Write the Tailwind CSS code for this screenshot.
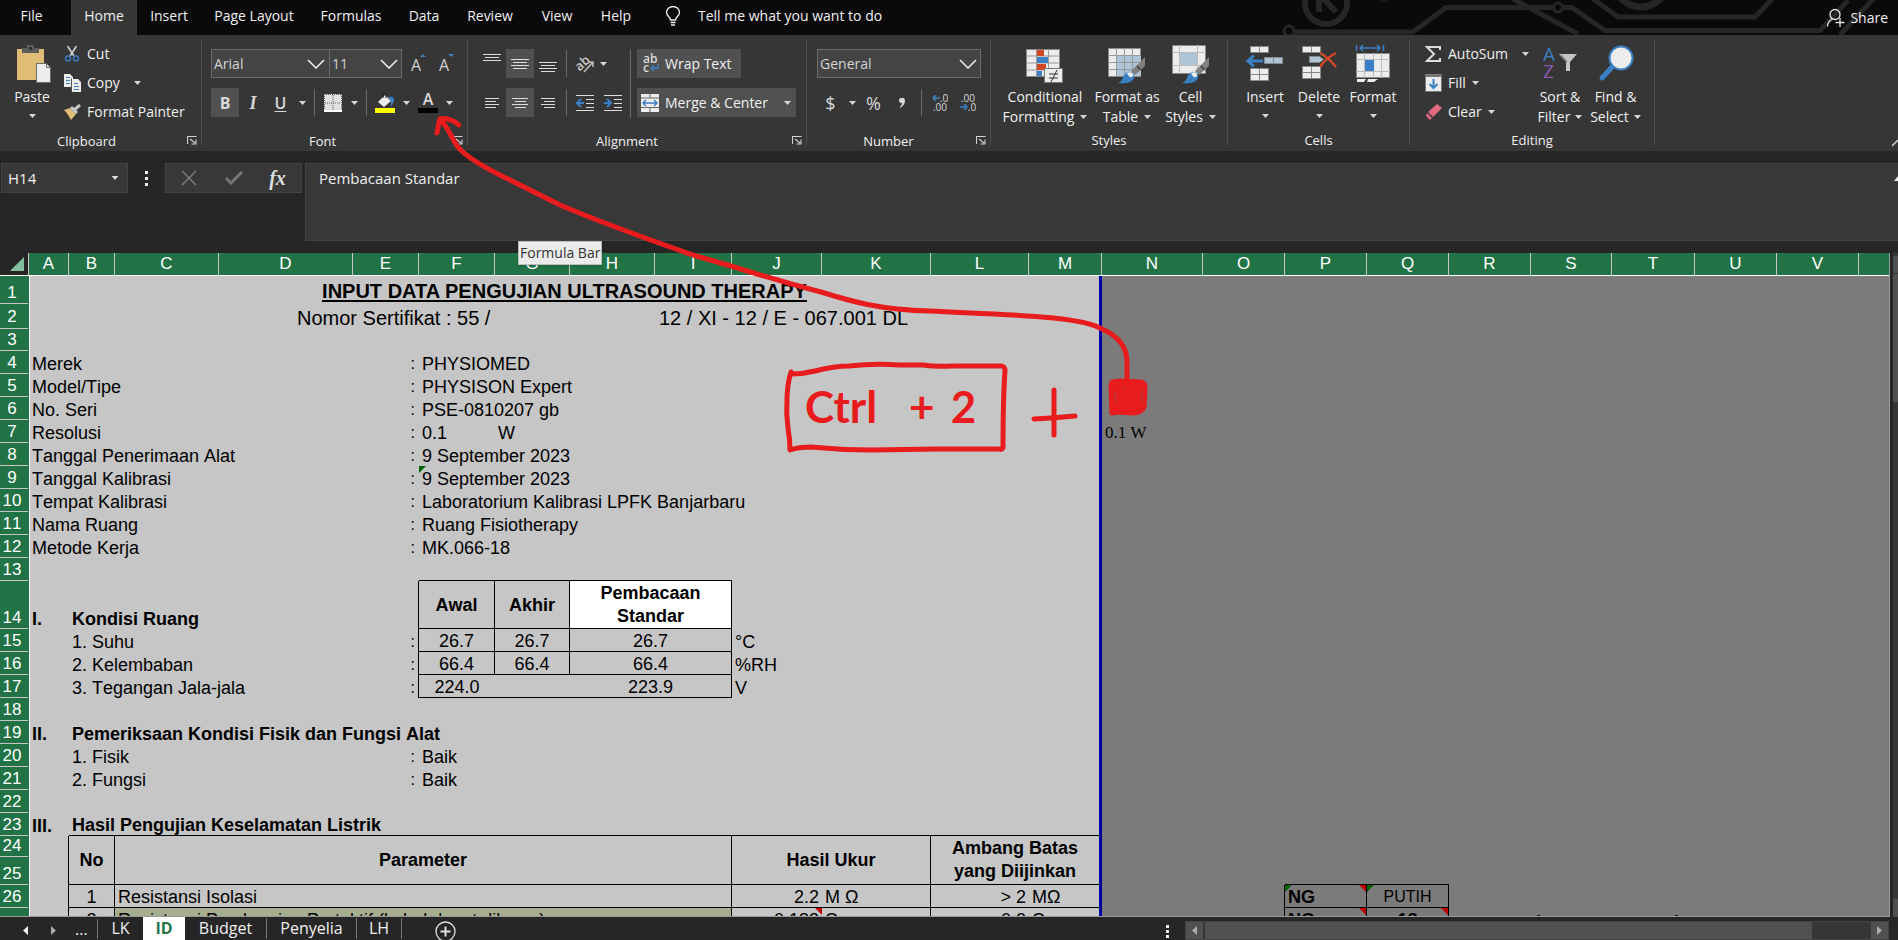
<!DOCTYPE html>
<html lang="en">
<head>
<meta charset="utf-8">
<meta name="viewport" content="width=device-width, initial-scale=1">
<title>Spreadsheet</title>
<script src="https://cdn.jsdelivr.net/npm/@tailwindcss/browser@4"></script>
</head>
<body class="relative flex h-screen flex-col overflow-hidden bg-[#262626] font-['Open_Sans','Noto_Sans',sans-serif] text-sm leading-5 text-[#f0f0f0]">
<svg class="hidden" aria-hidden="true">
  <symbol id="caret" viewBox="0 0 7 4"><path d="M0 0h7L3.5 4z" fill="#d8d8d8"/></symbol>
  <symbol id="launch" viewBox="0 0 10 9"><path d="M.5 8V.5H9.500M3 3l5 4M9 3.500V8H4.500" fill="none" stroke="#d0d0d0" stroke-width="1.100"/></symbol>
  <symbol id="chev" viewBox="0 0 18 10"><path d="M1 1l8 8 8-8" fill="none" stroke="#f0f0f0" stroke-width="1.500"/></symbol>
  <symbol id="brush" viewBox="0 0 28 28"><path d="M27 1v9L17 19l-4-4z" fill="#808080"/><path d="M19 10l3.500 4" stroke="#363636" stroke-width="1.200"/><path d="M0 27c6-2 4-9 10-11 4-1 7 3 6 6-2 5-10 6-16 5z" fill="#3b7fc4"/><path d="M9 17c3-2 7 0 6 3-2 3-5 0-6-3z" fill="#ececec"/></symbol>
</svg>

<!-- Ribbon tabs -->
<nav class="relative flex h-[35px] shrink-0 items-stretch bg-[#0a0a0a] pb-2" aria-label="Ribbon tabs">
  <svg class="absolute top-0 right-0 h-[35px] w-[620px]" viewBox="1278 0 620 35" fill="none" stroke="#262626" stroke-width="5" aria-hidden="true">
    <circle cx="1326" cy="3" r="21" stroke-width="6"/><path d="M1319-6v18M1319-6l17 18" stroke-width="6"/>
    <circle cx="1289" cy="31" r="5" stroke-width="3"/><path d="M1294 32h119l33-24.500h107M1563 7.500h9l33 23h215l28-30M1513-1l65 35M1592-2l26 19h137l18-19M1840 35l34-37"/>
    <circle cx="1558" cy="7.500" r="4.500" stroke-width="3"/><circle cx="1641" cy="-20" r="27" stroke-width="7"/><circle cx="1384" cy="-3" r="4" fill="#262626" stroke="none"/>
  </svg>
  <button class="w-[71px] pt-[5px] pr-2 leading-5">File</button>
  <button class="-mb-2 w-[66px] bg-[#363636] pb-[3px]">Home</button>
  <button class="w-16 pt-[5px]">Insert</button>
  <button class="w-[106px] pt-[5px]">Page Layout</button>
  <button class="w-[88px] pt-[5px]">Formulas</button>
  <button class="w-[58px] pt-[5px]">Data</button>
  <button class="w-[74px] pt-[5px]">Review</button>
  <button class="w-[60px] pt-[5px]">View</button>
  <button class="w-[58px] pt-[5px]">Help</button>
  <button class="flex items-center gap-[17px] pt-[5px] pl-5">
    <svg class="h-5 w-4" viewBox="0 0 16 20" fill="none" stroke="#f0f0f0" stroke-width="1.300"><path d="M5.500 14c0-3-4-4-4-7.500a6.500 6 0 0 1 13 0c0 3.500-4 4.500-4 7.500zM5.500 16.500h5M6 19h4"/></svg>
    Tell me what you want to do</button>
  <button class="relative ml-auto flex items-center gap-1 pt-2 pr-[10px]">
    <svg class="size-5" viewBox="0 0 20 20" fill="none" stroke="#e4e4e4" stroke-width="1.300"><circle cx="9" cy="6.500" r="5"/><path d="M1.500 18.500c0-4 2-6 5-7.500M14 10v9M9.500 14.500h9"/></svg>Share</button>
</nav>

<!-- Ribbon -->
<section class="flex h-[116px] shrink-0 bg-[#363636] pt-[5px]" aria-label="Ribbon">
  <!-- Clipboard -->
  <div class="flex w-[201px] shrink-0 flex-col">
    <div class="flex flex-1">
      <button class="flex w-16 flex-col items-center pt-[5px]">
        <svg class="ml-1 h-[38px] w-9" viewBox="0 0 36 38"><rect x="1" y="4" width="27" height="31" fill="#e0bd75"/><path d="M6 8V3h5V0h7v3h5v5z" fill="#5c5c5c"/><rect x="13" y="2" width="3" height="3" fill="#2c2c2c"/><path d="M20.500 18.500h10l4 4v15h-14z" fill="#ececec" stroke="#6b6b6b"/><path d="M30.500 18.500v4h4" fill="none" stroke="#6b6b6b"/></svg>
        <span class="pt-1">Paste</span><svg class="mt-[7px] h-1 w-[7px]"><use href="#caret"/></svg>
      </button>
      <div class="-mt-px flex flex-col">
        <button class="flex h-[29px] items-center gap-[7px]"><svg class="size-4" viewBox="0 0 16 18"><path d="M3 0l7 11M13 0L6 11" stroke="#c8c8c8" stroke-width="2"/><g fill="none" stroke="#3b7fc4" stroke-width="1.500"><circle cx="3.500" cy="14" r="2.800"/><circle cx="12.500" cy="14" r="2.800"/></g></svg>Cut</button>
        <button class="flex h-[29px] items-center gap-[6px]"><svg class="h-[18px] w-[17px]" viewBox="0 0 17 18"><path d="M0 0h6l3 3v10H0zM8 5h6l3 3v10H8z" fill="#ececec"/><path d="M7.500 4.500v13" stroke="#555"/><path d="M2 3.500h4M2 6.500h4M2 9.500h4M10 9.500h4M10 12.500h5M10 15.500h5" stroke="#3b7fc4"/></svg>Copy<svg class="ml-2 h-1 w-[7px]"><use href="#caret"/></svg></button>
        <button class="flex h-[29px] items-center gap-[6px]"><svg class="h-4 w-[17px]" viewBox="0 0 17 16"><path d="M0 6l6-2 6 6-5 6C5 12 3 9 0 6z" fill="#e0bd75"/><path d="M7 3l6 6M10 6l6-5" stroke="#c8c8c8" stroke-width="3"/></svg>Format Painter</button>
      </div>
    </div>
    <div class="grid h-[21px] grid-cols-[1fr_auto_1fr] items-center text-[13px]"><i></i><span class="pr-7">Clipboard</span><button class="ml-auto pr-1" aria-label="Clipboard settings"><svg class="h-[9px] w-[10px]"><use href="#launch"/></svg></button></div>
  </div>
  <div class="h-[105px] w-px shrink-0 bg-[#505050]"></div>
  <!-- Font -->
  <div class="flex w-[265px] shrink-0 flex-col">
    <div class="flex flex-1 flex-col gap-[10px] pt-[9px] pl-[9px]">
      <div class="flex h-[29px]">
        <label class="grid w-[119px] items-center border border-[#6a6a6a] bg-[#444]"><select aria-label="Font" class="col-start-1 row-start-1 appearance-none pl-[2px] text-[#d4d4d4]"><option>Arial</option></select><svg class="pointer-events-none col-start-1 row-start-1 mr-1 ml-auto h-[10px] w-[18px]"><use href="#chev"/></svg></label>
        <label class="-ml-px grid w-[73px] items-center border border-[#6a6a6a] bg-[#444]"><select aria-label="Font size" class="col-start-1 row-start-1 appearance-none pl-[2px] text-[#d4d4d4]"><option>11</option></select><svg class="pointer-events-none col-start-1 row-start-1 mr-[3px] ml-auto h-[10px] w-[18px]"><use href="#chev"/></svg></label>
        <button class="relative w-7 pt-[2px] text-base text-[#d0d0d0]" aria-label="Increase font size">A<svg class="absolute top-[5px] right-1 h-[3px] w-[6px]"><path d="M0 3h6L3 0z" fill="#3b7fc4"/></svg></button>
        <button class="relative w-7 pt-[2px] text-base text-[#d0d0d0]" aria-label="Decrease font size">A<svg class="absolute top-[5px] right-1 h-[3px] w-[6px]"><path d="M0 0h6L3 3z" fill="#3b7fc4"/></svg></button>
      </div>
      <div class="flex h-[29px] items-center">
        <button class="h-full w-7 bg-[#505050] text-base font-bold text-[#d8d8d8]">B</button>
        <button class="w-7 font-['Liberation_Serif',serif] text-lg font-bold text-[#d8d8d8] italic">I</button>
        <button class="w-[27px] text-base font-semibold text-[#d8d8d8] underline underline-offset-2">U</button>
        <button class="flex w-4 justify-center" aria-label="Underline options"><svg class="h-1 w-[7px]"><use href="#caret"/></svg></button>
        <i class="mx-1 h-[27px] w-px bg-[#6a6a6a]"></i>
        <button class="flex w-[27px] justify-center" aria-label="Borders"><svg class="size-[18px]" viewBox="0 0 18 18"><path d="M0 0h18v18H0z" fill="#e0e0e0"/><path d="M0 .5h18M.5 0v18M17.500 0v18M9 1v16M1 9h16" stroke="#666" stroke-dasharray="1 1"/><path d="M0 17h18" stroke="#fff" stroke-width="2"/></svg></button>
        <button class="flex w-4 justify-center" aria-label="Border options"><svg class="h-1 w-[7px]"><use href="#caret"/></svg></button>
        <i class="mx-1 h-[27px] w-px bg-[#6a6a6a]"></i>
        <button class="flex w-7 justify-center" aria-label="Fill color"><svg class="h-5 w-5" viewBox="0 0 20 20"><path d="M3 9l7-7 6 6-7 6z" fill="#ececec"/><path d="M8 5V1q2-2 3 0v4" fill="none" stroke="#222"/><path d="M13 4q7-1 6 4l-3 6V8z" fill="#3b7fc4"/><path d="M0 15h20v5H0z" fill="#ff0"/></svg></button>
        <button class="flex w-[14px] justify-center" aria-label="Fill color options"><svg class="h-1 w-[7px]"><use href="#caret"/></svg></button>
        <button class="flex w-[30px] flex-col items-center text-base leading-[14px] font-semibold text-[#d8d8d8]" aria-label="Font color">A<span class="mt-[2px] h-[5px] w-5 bg-black"></span></button>
        <button class="flex w-3 justify-center" aria-label="Font color options"><svg class="h-1 w-[7px]"><use href="#caret"/></svg></button>
      </div>
    </div>
    <div class="grid h-[21px] grid-cols-[1fr_auto_1fr] items-center text-[13px]"><i></i><span class="pr-6">Font</span><button class="ml-auto pr-1" aria-label="Font settings"><svg class="h-[9px] w-[10px]"><use href="#launch"/></svg></button></div>
  </div>
  <div class="h-[105px] w-px shrink-0 bg-[#505050]"></div>
  <!-- Alignment -->
  <div class="flex w-[338px] shrink-0 flex-col">
    <div class="flex flex-1 pt-[9px] pl-[10px]">
      <div class="flex w-[152px] flex-col gap-[10px]">
        <div class="flex h-[29px] items-center">
          <button class="flex h-full w-7 items-start justify-center pt-[5px]" aria-label="Top align"><svg class="h-2 w-[18px]"><path d="M0 .5h18M2 3.500h14M0 6.500h18" stroke="#dcdcdc"/></svg></button>
          <button class="flex h-full w-7 items-center justify-center bg-[#505050]" aria-label="Middle align"><svg class="h-3 w-[18px]"><path d="M0 1.500h18M2 4.500h14M0 7.500h18M2 10.500h14" stroke="#dcdcdc"/></svg></button>
          <button class="flex h-full w-7 items-end justify-center pb-[5px]" aria-label="Bottom align"><svg class="h-3 w-[18px]"><path d="M0 1.500h18M2 4.500h14M0 7.500h18M2 10.500h14" stroke="#dcdcdc"/></svg></button>
          <i class="mx-1 h-[27px] w-px bg-[#6a6a6a]"></i>
          <button class="ml-1 flex items-center gap-[5px]" aria-label="Orientation"><svg class="h-[18px] w-5 overflow-visible" viewBox="0 0 20 18"><text x="0" y="13" font-size="13" font-weight="600" fill="#c8c8c8" transform="rotate(-42 7 9)" font-family="Open Sans">ab</text><path d="M9 17L18 7M13 7h5v5" fill="none" stroke="#c0c0c0" stroke-width="1.500"/></svg><svg class="h-1 w-[7px]"><use href="#caret"/></svg></button>
        </div>
        <div class="flex h-[29px] items-center">
          <button class="flex h-full w-7 items-center justify-center" aria-label="Align left"><svg class="h-3 w-[14px]"><path d="M0 1.500h14M0 4.500h11M0 7.500h14M0 10.500h11" stroke="#dcdcdc"/></svg></button>
          <button class="flex h-full w-7 items-center justify-center bg-[#505050]" aria-label="Center"><svg class="h-3 w-4"><path d="M0 1.500h16M3 4.500h11M0 7.500h16M3 10.500h11" stroke="#dcdcdc"/></svg></button>
          <button class="flex h-full w-7 items-center justify-center" aria-label="Align right"><svg class="h-3 w-[14px]"><path d="M0 1.500h14M3 4.500h11M0 7.500h14M3 10.500h11" stroke="#dcdcdc"/></svg></button>
          <i class="mx-1 h-[27px] w-px bg-[#6a6a6a]"></i>
          <button class="flex w-7 justify-center" aria-label="Decrease indent"><svg class="h-4 w-[18px]"><path d="M0 .5h18M10 4.500h8M10 8.500h8M10 12.500h8M0 15.500h18" stroke="#dcdcdc"/><path d="M8 8H1M5 4L1 8l4 4" fill="none" stroke="#3b7fc4" stroke-width="2"/></svg></button>
          <button class="flex w-7 justify-center" aria-label="Increase indent"><svg class="h-4 w-[18px]"><path d="M0 .5h18M10 4.500h8M10 8.500h8M10 12.500h8M0 15.500h18" stroke="#dcdcdc"/><path d="M0 8h7M3 4l4 4-4 4" fill="none" stroke="#3b7fc4" stroke-width="2"/></svg></button>
        </div>
      </div>
      <i class="h-[69px] w-px bg-[#6a6a6a]"></i>
      <div class="flex flex-col items-start gap-[10px] pl-[6px]">
        <button class="flex h-[29px] w-[104px] items-center gap-[6px] bg-[#505050] pl-[6px]"><svg class="h-[18px] w-4 overflow-visible" viewBox="0 0 16 18"><g font-family="Open Sans" font-size="12" font-weight="600" fill="#dcdcdc"><text x="0" y="8">ab</text><text x="0" y="17">c</text></g><path d="M15 9v4H9M11 10.500L8 13l3 3" fill="none" stroke="#3b7fc4" stroke-width="1.500"/></svg>Wrap Text</button>
        <button class="flex h-[29px] w-[159px] items-center gap-[6px] bg-[#505050] pl-1"><svg class="size-[18px]" viewBox="0 0 18 18"><path d="M0 0h18v18H0z" fill="#ececec"/><path d="M0 4h18M0 13.500h18M9 0v4M9 13v5" stroke="#666"/><path d="M2 9h14M5 6L2 9l3 3M13 6l3 3-3 3" fill="none" stroke="#3b7fc4" stroke-width="1.500"/></svg>Merge &amp; Center<svg class="mr-[5px] ml-auto h-1 w-[7px]"><use href="#caret"/></svg></button>
      </div>
    </div>
    <div class="grid h-[21px] grid-cols-[1fr_auto_1fr] items-center text-[13px]"><i></i><span class="pr-5">Alignment</span><button class="ml-auto pr-1" aria-label="Alignment settings"><svg class="h-[9px] w-[10px]"><use href="#launch"/></svg></button></div>
  </div>
  <div class="h-[105px] w-px shrink-0 bg-[#505050]"></div>
  <!-- Number -->
  <div class="flex w-[183px] shrink-0 flex-col">
    <div class="flex flex-1 flex-col gap-[10px] pt-[9px] pl-[10px]">
      <label class="grid h-[29px] w-[164px] items-center border border-[#6a6a6a] bg-[#444]"><select aria-label="Number format" class="col-start-1 row-start-1 appearance-none pl-[2px] text-[#d4d4d4]"><option>General</option></select><svg class="pointer-events-none col-start-1 row-start-1 mr-[3px] ml-auto h-[10px] w-[18px]"><use href="#chev"/></svg></label>
      <div class="flex h-[29px] items-center text-[#d8d8d8]">
        <button class="w-[27px] text-lg">$</button>
        <button class="flex w-4 justify-center" aria-label="Currency options"><svg class="h-1 w-[7px]"><use href="#caret"/></svg></button>
        <button class="w-[27px] text-lg">%</button>
        <button class="flex w-[30px] justify-center" aria-label="Comma style"><svg class="h-[10px] w-[6px]"><path d="M0 2.500a2.700 2.500 0 0 1 6 0Q6 7 1 10V9Q3 7 3 5 0 5 0 2.500z" fill="#d8d8d8"/></svg></button>
        <i class="mx-1 h-[27px] w-px bg-[#6a6a6a]"></i>
        <button class="flex w-7 flex-col items-center text-[10px] leading-[9px]"><span class="flex items-center"><svg class="h-[6px] w-[8px]"><path d="M8 3H1M4 0L1 3l3 3" fill="none" stroke="#3b7fc4" stroke-width="1.500"/></svg>.0</span><span>.00</span></button>
        <button class="flex w-7 flex-col items-center text-[10px] leading-[9px]"><span>.00</span><span class="flex items-center"><svg class="h-[6px] w-[8px]"><path d="M0 3h7M4 0l3 3-3 3" fill="none" stroke="#3b7fc4" stroke-width="1.500"/></svg>.0</span></button>
      </div>
    </div>
    <div class="grid h-[21px] grid-cols-[1fr_auto_1fr] items-center text-[13px]"><i></i><span class="pr-5">Number</span><button class="ml-auto pr-1" aria-label="Number settings"><svg class="h-[9px] w-[10px]"><use href="#launch"/></svg></button></div>
  </div>
  <div class="h-[105px] w-px shrink-0 bg-[#505050]"></div>
  <!-- Styles -->
  <div class="flex w-[236px] shrink-0 flex-col">
    <div class="flex flex-1 pt-1 pl-[9px]">
      <button class="flex w-[90px] flex-col items-center"><svg class="h-[40px] w-[38px]" viewBox="0 0 38 40"><path d="M.5 5.500h33v27H.5z" fill="#ececec" stroke="#888"/><path d="M0 12h34M0 19h34M0 26h34M10.500 5v28M22.500 5v28" stroke="#999"/><path d="M11 6h7v6h-7zM11 20h9v6h-9z" fill="#d24726"/><path d="M11 13h11v6H11zM11 27h5v5h-5z" fill="#3b7fc4"/><path d="M18.500 24.500h18v14h-18z" fill="#ececec" stroke="#777"/><path d="M23 30h9M23 34h9M31 26l-6 12" stroke="#333"/></svg><span class="pt-[3px]">Conditional</span><span class="flex items-center gap-[6px]">Formatting<svg class="h-1 w-[7px]"><use href="#caret"/></svg></span></button>
      <button class="flex w-[74px] flex-col items-center"><svg class="h-[40px] w-[38px]" viewBox="0 0 38 40"><path d="M.5 4.500h32v28H.5z" fill="#ececec" stroke="#888"/><path d="M9 12h24v20H9z" fill="#b0c4d8"/><path d="M0 11.500h33M0 18.500h33M0 25.500h33M8.500 4v29M16.500 4v29M24.500 4v29" stroke="#999"/><svg x="10" y="12" width="28" height="28"><use href="#brush"/></svg></svg><span class="pt-[3px] whitespace-nowrap">Format as</span><span class="flex items-center gap-[6px]">Table<svg class="h-1 w-[7px]"><use href="#caret"/></svg></span></button>
      <button class="flex w-[53px] flex-col items-center"><svg class="h-[40px] w-[38px]" viewBox="0 0 38 40"><path d="M.5 1.500h33v28H.5z" fill="#ececec" stroke="#888"/><path d="M0 8.500h34M0 21.500h34M7.500 1v29M25.500 1v29" stroke="#bbb"/><path d="M8 9h17v12H8z" fill="#b0c4d8"/><svg x="10" y="12" width="28" height="28"><use href="#brush"/></svg></svg><span class="pt-[3px]">Cell</span><span class="flex items-center gap-[6px]">Styles<svg class="h-1 w-[7px]"><use href="#caret"/></svg></span></button>
    </div>
    <div class="h-[21px] text-center text-[13px]">Styles</div>
  </div>
  <div class="h-[105px] w-px shrink-0 bg-[#505050]"></div>
  <!-- Cells -->
  <div class="flex w-[181px] shrink-0 flex-col">
    <div class="flex flex-1 pt-1 pl-[10px]">
      <button class="flex w-[54px] flex-col items-center"><svg class="h-[40px] w-[38px]" viewBox="0 0 38 40"><g fill="#ececec" stroke="#888"><path d="M4.500 2.500h18v6h-18zM4.500 24.500h18v12h-18zM13.500 2.500v6M13.500 24.500v12M4.500 30.500h18"/><path d="M18.500 13.500h18v6h-18zM27.500 13.500v6" fill="#b0c4d8"/></g><path d="M17 17H3M8 11.500L2 17l6 5.500" fill="none" stroke="#3b7fc4" stroke-width="3"/></svg><span class="pt-[3px]">Insert</span><svg class="mt-[7px] h-1 w-[7px]"><use href="#caret"/></svg></button>
      <button class="flex w-[54px] flex-col items-center"><svg class="h-[40px] w-[38px]" viewBox="0 0 38 40"><g fill="#ececec" stroke="#888"><path d="M2.500 2.500h18v6h-18zM2.500 22.500h18v12h-18zM11.500 2.500v6M11.500 22.500v12M2.500 28.500h18"/><path d="M9.500 12.500h10l4 3-4 3h-10z" fill="#b0c4d8"/></g><path d="M20 9q8 4 16 14M36 9q-10 5-16 14" fill="none" stroke="#d24726" stroke-width="2.500"/></svg><span class="pt-[3px]">Delete</span><svg class="mt-[7px] h-1 w-[7px]"><use href="#caret"/></svg></button>
      <button class="flex w-[54px] flex-col items-center"><svg class="h-[40px] w-[38px]" viewBox="0 0 38 40"><path d="M2.500 1v6M29.500 1v6M6 4h20M9 1L6 4l3 3M23 1l3 3-3 3" fill="none" stroke="#3b7fc4" stroke-width="1.500"/><path d="M2.500 9.500h33v24h-33z" fill="#ececec" stroke="#888"/><path d="M2 15.500h34M2 27.500h34M10.500 9v25M19.500 9v25M27.500 9v25" stroke="#bbb"/><path d="M11 16h9v11h-9z" fill="#3b7fc4"/><path d="M3 35h9l-2 3H3zM14 35h10l-4 3h-7z" fill="#ececec"/></svg><span class="pt-[3px]">Format</span><svg class="mt-[7px] h-1 w-[7px]"><use href="#caret"/></svg></button>
    </div>
    <div class="h-[21px] text-center text-[13px]">Cells</div>
  </div>
  <div class="h-[105px] w-px shrink-0 bg-[#505050]"></div>
  <!-- Editing -->
  <div class="flex w-[244px] shrink-0 flex-col">
    <div class="flex flex-1 pl-[15px]">
      <div class="-mt-px flex w-[108px] flex-col items-start">
        <button class="flex h-[29px] w-full items-center gap-[6px]"><svg class="h-4 w-[17px]" viewBox="0 0 17 16"><path d="M15 4V1H2l7 7-7 7h13v-3" fill="none" stroke="#dcdcdc" stroke-width="2"/></svg>AutoSum<svg class="mr-1 ml-auto h-1 w-[7px]"><use href="#caret"/></svg></button>
        <button class="flex h-[29px] items-center gap-[6px]"><svg class="h-[18px] w-[17px]" viewBox="0 0 17 18"><path d="M.5.5h16v17H.5z" fill="#ececec" stroke="#777"/><path d="M0 1.500h17" stroke="#777" stroke-width="3"/><path d="M8.500 5v9M4.500 10l4 4 4-4" fill="none" stroke="#3b7fc4" stroke-width="2"/></svg>Fill<svg class="h-1 w-[7px]"><use href="#caret"/></svg></button>
        <button class="flex h-[29px] items-center gap-[6px]"><svg class="h-4 w-[17px]" viewBox="0 0 17 16"><path d="M12 0l5 4-9 9-5-5zM2 9l5 5-2 2-4-4z" fill="#e0697f"/></svg>Clear<svg class="h-1 w-[7px]"><use href="#caret"/></svg></button>
      </div>
      <button class="flex w-[54px] flex-col items-center pt-1"><svg class="h-[40px] w-[38px] overflow-visible" viewBox="0 0 38 40"><g font-family="Open Sans" font-size="19"><text x="2" y="17" fill="#3b7fc4">A</text><text x="2" y="34" fill="#8e55b5">Z</text></g><path d="M18 10h18l-7 8v9h-4v-9z" fill="#c4c4c4"/><path d="M20 11l6 7" stroke="#555"/></svg><span class="pt-[3px] whitespace-nowrap">Sort &amp;</span><span class="flex items-center gap-[5px]">Filter<svg class="h-1 w-[7px]"><use href="#caret"/></svg></span></button>
      <button class="flex w-[57px] flex-col items-center pt-1"><svg class="h-[40px] w-[38px]" viewBox="0 0 38 40"><path d="M16 22L5 34" stroke="#3b7fc4" stroke-width="5" stroke-linecap="round"/><circle cx="24" cy="14" r="11.500" fill="#ececec" stroke="#3b7fc4" stroke-width="2"/></svg><span class="pt-[3px] whitespace-nowrap">Find &amp;</span><span class="flex items-center gap-[5px]">Select<svg class="h-1 w-[7px]"><use href="#caret"/></svg></span></button>
    </div>
    <div class="h-[21px] text-center text-[13px]">Editing</div>
  </div>
  <div class="h-[105px] w-px shrink-0 bg-[#505050]"></div>
  <button class="mt-auto mb-1 ml-auto" aria-label="Collapse the ribbon"><svg class="h-2 w-[6px]"><path d="M0 7l6-6" stroke="#d8d8d8" stroke-width="1.300"/></svg></button>
</section>

<!-- Formula bar -->
<section class="flex h-[102px] shrink-0 items-start py-3 pl-px text-[15px]" aria-label="Formula bar">
  <div class="flex h-[30px] w-[127px] items-center border border-[#444] bg-[#383838] pr-2"><input aria-label="Name box" value="H14" class="w-full bg-transparent pl-[6px]"><svg class="h-1 w-2 shrink-0"><use href="#caret"/></svg></div>
  <div class="flex h-[30px] w-[37px] flex-col items-center justify-center gap-[3px]"><i class="size-[3px] bg-[#eee]"></i><i class="size-[3px] bg-[#eee]"></i><i class="size-[3px] bg-[#eee]"></i></div>
  <div class="flex h-[30px] w-[137px] items-center border border-[#444] bg-[#383838]">
    <button class="flex w-[45px] justify-center" aria-label="Cancel"><svg class="size-4"><path d="M1 1l14 14M15 1L1 15" stroke="#777" stroke-width="1.700"/></svg></button>
    <button class="flex w-[45px] justify-center" aria-label="Enter"><svg class="h-[14px] w-[18px]"><path d="M1 7l5 5L17 1" fill="none" stroke="#777" stroke-width="3"/></svg></button>
    <button class="w-[43px] font-['Liberation_Serif',serif] text-xl font-bold text-[#ddd] italic" aria-label="Insert function">fx</button>
  </div>
  <div class="ml-[3px] flex h-[78px] flex-1 items-start border border-r-0 border-[#444] bg-[#383838]"><input aria-label="Formula" value="Pembacaan Standar" class="mt-[4px] w-full bg-transparent pl-[13px]"><svg class="mt-3 h-[5px] w-1 shrink-0"><path d="M0 5l4-5v5z" fill="#eee"/></svg></div>
</section>

<!-- Worksheet -->
<main class="flex min-h-0 flex-1">
  <div class="min-w-0 flex-1 overflow-hidden border-r border-b border-[#9a9a9a]">
    <table class="w-full table-fixed border-separate border-spacing-0 bg-[#c6c6c6] font-['Liberation_Sans',Arial,sans-serif] text-lg leading-5 whitespace-nowrap text-black [font-kerning:none] [&_td]:p-0 [&_td]:align-bottom [&_tbody_th]:border-b [&_tbody_th]:border-b-[#c6c6c6] [&_tbody_th]:border-r-2 [&_tbody_th]:border-r-[#217346] [&_tbody_th]:bg-[#217346] [&_tbody_th]:p-0 [&_tbody_th]:pr-[3px] [&_tbody_th]:align-bottom [&_tbody_th]:text-[17px] [&_tbody_th]:font-normal [&_tbody_th]:text-white">
      <colgroup><col class="w-[29px]"><col class="w-[40px]"><col class="w-[46px]"><col class="w-[104px]"><col class="w-[134px]"><col class="w-[66px]"><col class="w-[76px]"><col class="w-[75px]"><col class="w-[85px]"><col class="w-[77px]"><col class="w-[90px]"><col class="w-[109px]"><col class="w-[98px]"><col class="w-[73px]"><col class="w-[101px]"><col class="w-[82px]"><col class="w-[82px]"><col class="w-[82px]"><col class="w-[82px]"><col class="w-[81px]"><col class="w-[83px]"><col class="w-[82px]"><col class="w-[82px]"><col></colgroup>
      <thead><tr class="h-[23px] text-[17px] text-white [&>th]:border-r [&>th]:border-b [&>th]:border-r-[#c6c6c6] [&>th]:border-b-white [&>th]:bg-[#217346] [&>th]:p-0 [&>th]:font-normal">
        <th class="bg-[#262626]!"><svg class="mr-1 ml-auto h-[14px] w-[14px]"><path d="M14 0v14H0z" fill="#86bfa0"/></svg></th><th>A</th><th>B</th><th>C</th><th>D</th><th>E</th><th>F</th><th>G</th><th>H</th><th>I</th><th>J</th><th>K</th><th>L</th><th>M</th><th>N</th><th>O</th><th>P</th><th>Q</th><th>R</th><th>S</th><th>T</th><th>U</th><th>V</th><th class="border-r-0!"></th></tr></thead>
      <tbody>
        <tr class="h-7"><th>1</th><td colspan="13" class="border-r-3 border-l border-l-white border-r-[#0000a8] pt-px! text-center align-middle! text-xl leading-[22px] font-bold [font-kerning:normal]"><span class="underline decoration-2 underline-offset-2">INPUT DATA PENGUJIAN ULTRASOUND THERAPY</span></td><td colspan="10" class="bg-[#7b7b7b]"></td></tr>
        <tr class="h-[25px] text-xl leading-[22px]"><th>2</th><td colspan="3" class="border-l border-white"></td><td colspan="5" class="pl-[78px]!">Nomor Sertifikat : 55 /</td><td colspan="5" class="border-r-3 border-[#0000a8] pl-1!">12 / XI - 12 / E - 067.001 DL</td><td colspan="10" class="bg-[#7b7b7b]"></td></tr>
        <tr class="h-[22px]"><th>3</th><td colspan="13" class="border-r-3 border-l border-l-white border-r-[#0000a8]"></td><td colspan="10" class="bg-[#7b7b7b]"></td></tr>
        <tr class="h-[23px]"><th>4</th><td colspan="4" class="border-l border-white pl-[2px]!">Merek</td><td class="pr-[4px]! text-right text-base leading-5">:</td><td colspan="8" class="border-r-3 border-[#0000a8] pl-[3px]!">PHYSIOMED</td><td colspan="10" class="bg-[#7b7b7b]"></td></tr>
        <tr class="h-[23px]"><th>5</th><td colspan="4" class="border-l border-white pl-[2px]!">Model/Tipe</td><td class="pr-[4px]! text-right text-base leading-5">:</td><td colspan="8" class="border-r-3 border-[#0000a8] pl-[3px]!">PHYSISON Expert</td><td colspan="10" class="bg-[#7b7b7b]"></td></tr>
        <tr class="h-[23px]"><th>6</th><td colspan="4" class="border-l border-white pl-[2px]!">No. Seri</td><td class="pr-[4px]! text-right text-base leading-5">:</td><td colspan="8" class="border-r-3 border-[#0000a8] pl-[3px]!">PSE-0810207 gb</td><td colspan="10" class="bg-[#7b7b7b]"></td></tr>
        <tr class="h-[23px]"><th>7</th><td colspan="4" class="border-l border-white pl-[2px]!">Resolusi</td><td class="pr-[4px]! text-right text-base leading-5">:</td><td class="pl-[3px]!">0.1</td><td colspan="7" class="border-r-3 border-[#0000a8] pl-[3px]!">W</td><td colspan="10" class="bg-[#7b7b7b] pl-[3px]! font-['Liberation_Serif',serif] text-[17px] leading-5">0.1 W</td></tr>
        <tr class="h-[23px]"><th>8</th><td colspan="4" class="border-l border-white pl-[2px]!">Tanggal Penerimaan Alat</td><td class="pr-[4px]! text-right text-base leading-5">:</td><td colspan="8" class="border-r-3 border-[#0000a8] pl-[3px]!">9 September 2023</td><td colspan="10" class="bg-[#7b7b7b]"></td></tr>
        <tr class="h-[23px]"><th>9</th><td colspan="4" class="border-l border-white pl-[2px]!">Tanggal Kalibrasi</td><td class="pr-[4px]! text-right text-base leading-5">:</td><td colspan="8" class="relative border-r-3 border-[#0000a8] pl-[3px]!"><svg class="absolute top-0 left-0 size-[7px]"><path d="M0 0h7L0 7z" fill="#006400"/></svg>9 September 2023</td><td colspan="10" class="bg-[#7b7b7b]"></td></tr>
        <tr class="h-[23px]"><th>10</th><td colspan="4" class="border-l border-white pl-[2px]!">Tempat Kalibrasi</td><td class="pr-[4px]! text-right text-base leading-5">:</td><td colspan="8" class="border-r-3 border-[#0000a8] pl-[3px]!">Laboratorium Kalibrasi LPFK Banjarbaru</td><td colspan="10" class="bg-[#7b7b7b]"></td></tr>
        <tr class="h-[23px]"><th>11</th><td colspan="4" class="border-l border-white pl-[2px]!">Nama Ruang</td><td class="pr-[4px]! text-right text-base leading-5">:</td><td colspan="8" class="border-r-3 border-[#0000a8] pl-[3px]!">Ruang Fisiotherapy</td><td colspan="10" class="bg-[#7b7b7b]"></td></tr>
        <tr class="h-[23px]"><th>12</th><td colspan="4" class="border-l border-white pl-[2px]!">Metode Kerja</td><td class="pr-[4px]! text-right text-base leading-5">:</td><td colspan="8" class="border-r-3 border-[#0000a8] pl-[3px]!">MK.066-18</td><td colspan="10" class="bg-[#7b7b7b]"></td></tr>
        <tr class="h-[23px]"><th>13</th><td colspan="5" class="border-l border-white"></td><td colspan="4" class="border-b border-black"></td><td colspan="4" class="border-r-3 border-[#0000a8]"></td><td colspan="10" class="bg-[#7b7b7b]"></td></tr>
        <tr class="h-12 font-bold"><th>14</th><td class="border-l border-white pl-[2px]!">I.</td><td colspan="3" class="pl-[3px]!">Kondisi Ruang</td><td class="border-r border-black"></td><td class="border-r border-b border-black text-center align-middle!">Awal</td><td class="border-r border-b border-black text-center align-middle!">Akhir</td><td colspan="2" class="border-r border-b border-black bg-white text-center align-middle! leading-[23px]">Pembacaan<br>Standar</td><td colspan="4" class="border-r-3 border-[#0000a8]"></td><td colspan="10" class="bg-[#7b7b7b]"></td></tr>
        <tr class="h-[23px]"><th>15</th><td class="border-l border-white"></td><td colspan="3" class="pl-[3px]!">1. Suhu</td><td class="border-r border-black pr-[3px]! text-right text-base leading-5">:</td><td class="border-r border-b border-black text-center">26.7</td><td class="border-r border-b border-black text-center">26.7</td><td colspan="2" class="border-r border-b border-black text-center">26.7</td><td colspan="4" class="border-r-3 border-[#0000a8] pl-[3px]!">°C</td><td colspan="10" class="bg-[#7b7b7b]"></td></tr>
        <tr class="h-[23px]"><th>16</th><td class="border-l border-white"></td><td colspan="3" class="pl-[3px]!">2. Kelembaban</td><td class="border-r border-black pr-[3px]! text-right text-base leading-5">:</td><td class="border-r border-b border-black text-center">66.4</td><td class="border-r border-b border-black text-center">66.4</td><td colspan="2" class="border-r border-b border-black text-center">66.4</td><td colspan="4" class="border-r-3 border-[#0000a8] pl-[3px]!">%RH</td><td colspan="10" class="bg-[#7b7b7b]"></td></tr>
        <tr class="h-[23px]"><th>17</th><td class="border-l border-white"></td><td colspan="3" class="pl-[3px]!">3. Tegangan Jala-jala</td><td class="border-r border-black pr-[3px]! text-right text-base leading-5">:</td><td class="border-b border-black text-center">224.0</td><td class="border-b border-black"></td><td colspan="2" class="border-r border-b border-black text-center">223.9</td><td colspan="4" class="border-r-3 border-[#0000a8] pl-[3px]!">V</td><td colspan="10" class="bg-[#7b7b7b]"></td></tr>
        <tr class="h-[23px]"><th>18</th><td colspan="13" class="border-r-3 border-l border-l-white border-r-[#0000a8]"></td><td colspan="10" class="bg-[#7b7b7b]"></td></tr>
        <tr class="h-[23px] font-bold"><th>19</th><td class="border-l border-white pl-[2px]!">II.</td><td colspan="12" class="border-r-3 border-[#0000a8] pl-[3px]!">Pemeriksaan Kondisi Fisik dan Fungsi Alat</td><td colspan="10" class="bg-[#7b7b7b]"></td></tr>
        <tr class="h-[23px]"><th>20</th><td class="border-l border-white"></td><td colspan="3" class="pl-[3px]!">1. Fisik</td><td class="pr-[4px]! text-right text-base leading-5">:</td><td colspan="8" class="border-r-3 border-[#0000a8] pl-[3px]!">Baik</td><td colspan="10" class="bg-[#7b7b7b]"></td></tr>
        <tr class="h-[23px]"><th>21</th><td class="border-l border-white"></td><td colspan="3" class="pl-[3px]!">2. Fungsi</td><td class="pr-[4px]! text-right text-base leading-5">:</td><td colspan="8" class="border-r-3 border-[#0000a8] pl-[3px]!">Baik</td><td colspan="10" class="bg-[#7b7b7b]"></td></tr>
        <tr class="h-[23px]"><th>22</th><td colspan="13" class="border-r-3 border-l border-l-white border-r-[#0000a8]"></td><td colspan="10" class="bg-[#7b7b7b]"></td></tr>
        <tr class="h-[23px] font-bold"><th>23</th><td class="border-l border-white pl-[2px]!">III.</td><td colspan="12" class="border-r-3 border-b border-r-[#0000a8] border-b-black pl-[3px]!">Hasil Pengujian Keselamatan Listrik</td><td colspan="10" class="bg-[#7b7b7b]"></td></tr>
        <tr class="h-[21px] font-bold [&>td]:align-middle!"><th>24</th><td rowspan="2" class="border-r border-l border-r-black border-l-white"></td><td rowspan="2" class="border-r border-b border-black text-center">No</td><td colspan="7" rowspan="2" class="border-r border-b border-black text-center">Parameter</td><td colspan="2" rowspan="2" class="border-r border-b border-black text-center">Hasil Ukur</td><td colspan="2" rowspan="2" class="border-r-3 border-b border-r-[#0000a8] border-b-black text-center leading-[23px]">Ambang Batas<br>yang Diijinkan</td><td colspan="10" class="bg-[#7b7b7b]"></td></tr>
        <tr class="h-7"><th>25</th><td colspan="2" class="bg-[#7b7b7b]"></td><td colspan="2" class="border-b border-black bg-[#7b7b7b]"></td><td colspan="6" class="bg-[#7b7b7b]"></td></tr>
        <tr class="h-[23px]"><th>26</th><td class="border-r border-l border-r-black border-l-white"></td><td class="border-r border-b border-black text-center">1</td><td colspan="7" class="border-r border-b border-black pl-[3px]!">Resistansi Isolasi</td><td class="border-b border-black pr-[3px]! text-right">2.2</td><td class="border-r border-b border-black pl-[3px]!">M Ω</td><td class="border-b border-black pr-[3px]! text-right">&gt; 2</td><td class="border-r-3 border-b border-r-[#0000a8] border-b-black pl-[3px]!">MΩ</td>
          <td colspan="2" class="border-r border-black bg-[#7b7b7b]"></td><td class="relative border-r border-b border-black bg-[#7b7b7b] pl-[3px]! font-bold"><svg class="absolute top-0 left-0 size-[7px]"><path d="M0 0h7L0 7z" fill="#006400"/></svg><svg class="absolute top-0 right-0 size-[7px]"><path d="M0 0h7v7z" fill="#c00000"/></svg>NG</td><td class="relative border-r border-b border-black bg-[#7b7b7b] text-center text-base leading-5"><svg class="absolute top-0 left-0 size-[7px]"><path d="M0 0h7L0 7z" fill="#006400"/></svg>PUTIH</td><td colspan="6" class="bg-[#7b7b7b]"></td></tr>
        <tr class="h-[23px]"><th></th><td class="border-r border-l border-r-black border-l-white"></td><td class="border-r border-b border-black text-center">2</td><td colspan="7" class="border-r border-b border-black bg-[#a5ae8f] pl-[3px]!">Resistansi Pembumian Protektif (kabel dapat dilepas)</td><td class="relative border-b border-black pr-[3px]! text-right"><svg class="absolute top-0 right-0 size-[7px]"><path d="M0 0h7v7z" fill="#c00000"/></svg>0.183</td><td class="border-r border-b border-black pl-[3px]!">Ω</td><td class="border-b border-black pr-[3px]! text-right">0.2</td><td class="border-r-3 border-b border-r-[#0000a8] border-b-black pl-[3px]!">Ω</td>
          <td colspan="2" class="border-r border-black bg-[#7b7b7b]"></td><td class="relative border-r border-b border-black bg-[#7b7b7b] pl-[3px]! font-bold"><svg class="absolute top-0 right-0 size-[7px]"><path d="M0 0h7v7z" fill="#c00000"/></svg>NG</td><td class="relative border-r border-b border-black bg-[#7b7b7b] text-center font-bold"><svg class="absolute top-0 right-0 size-[7px]"><path d="M0 0h7v7z" fill="#c00000"/></svg>18</td><td class="bg-[#7b7b7b] pl-5! text-[15px] leading-5">t</td><td colspan="5" class="bg-[#7b7b7b] pl-1! text-[15px] leading-5 font-bold">( KASIH TANDA "-" )</td></tr>
      </tbody>
    </table>
  </div>
  <div class="ml-[3px] flex w-[5px] shrink-0 flex-col gap-px bg-[#363636] pt-[3px]"><i class="h-[17px] bg-[#505050]"></i><i class="h-32 bg-[#505050]"></i><i class="mt-auto h-[18px] bg-[#505050]"></i></div>
</main>

<!-- Sheet tabs and horizontal scrollbar -->
<footer class="flex h-[23px] shrink-0 items-center bg-[#262626] text-base leading-5">
  <button class="flex w-10 justify-end pt-1 pr-3" aria-label="Previous sheet"><svg class="h-[9px] w-[5px]"><path d="M5 0v9L0 4.500z" fill="#eee"/></svg></button>
  <button class="flex w-[26px] justify-center pt-1" aria-label="Next sheet"><svg class="h-[9px] w-[5px]"><path d="M0 0v9l5-4.500z" fill="#aaa"/></svg></button>
  <button class="w-8 border-r border-[#777] pl-[9px] text-left">...</button>
  <button class="w-[45px] pb-px">LK</button>
  <button class="h-full w-[42px] bg-white pb-px font-bold text-[#217346]">ID</button>
  <button class="w-[82px] border-r border-[#777] pb-px">Budget</button>
  <button class="w-[90px] border-r border-[#777] pb-px">Penyelia</button>
  <button class="w-[45px] border-r border-[#777] pb-px">LH</button>
  <button class="ml-[33px] pt-[5px]" aria-label="New sheet"><svg class="h-[21px] w-[21px]" fill="none" stroke="#e0e0e0"><circle cx="10.500" cy="10.500" r="9.500" stroke-width="1.300"/><path d="M5.500 10.500h10M10.500 5.500v10" stroke-width="2"/></svg></button>
  <div class="ml-auto flex flex-col gap-[2px] pt-[6px] pr-4"><i class="size-[3px] bg-[#eee]"></i><i class="size-[3px] bg-[#eee]"></i><i class="size-[3px] bg-[#eee]"></i></div>
  <div class="mt-1 mr-[9px] flex h-[19px] w-[704px] border border-[#444] bg-[#363636]">
    <button class="flex w-[17px] items-center justify-center bg-[#505050]" aria-label="Scroll left"><svg class="h-[9px] w-[5px]"><path d="M5 0v9L0 4.500z" fill="#aaa"/></svg></button>
    <div class="ml-[2px] w-[607px] bg-[#505050]"></div>
    <button class="ml-auto flex w-[17px] items-center justify-center bg-[#505050]" aria-label="Scroll right"><svg class="h-[9px] w-[5px]"><path d="M0 0v9l5-4.500z" fill="#aaa"/></svg></button>
  </div>
</footer>

<div role="tooltip" class="absolute top-[241px] left-[518px] border border-[#bbb] bg-[#ebebeb] px-px py-px whitespace-nowrap text-[#333] shadow">Formula Bar</div>

<!-- Pen annotations -->
<svg class="pointer-events-none absolute top-0 left-0 h-[940px] w-[1898px]" viewBox="0 0 1898 940" fill="none" stroke="#e81c1c" stroke-width="5" stroke-linecap="round" stroke-linejoin="round" aria-hidden="true">
  <path d="M1127 384V362C1127 346 1118 336 1102 329C1080 316 1010 315 930 311C880 310 850 301 821 292C790 284 760 275 731 266L693 255C650 240 600 222 560 205L510 180C485 168 466 157 458 147C450 136 448 127 440 119"/>
  <path d="M437 133Q438 126 440 119Q449 117 459 125"/>
  <path d="M791 374q12 0 24-3q20-5 34-5q26-3 50-1q15 0 24 0q12 2 30 1h49q3 1 3 4q-2 30-2 78q-1 2-4 1h-62l-66 1q-30 0-60-3q-12 0-21 3q0-10-2-22-2-14-1-28 0-15 4-28"/>
  <path d="M1054 390v45M1034 419q20-1 41-3"/>
  <path d="M1112 382l8-1 21 1q4 1 4 6l-1 19q-2 5-10 6l-18-1-4 1-1-27z" fill="#e81c1c"/>
  <path d="M1115 392l1 12M1142 388v14M1123 387l3 2" stroke="#a84040" stroke-width="1"/>
</svg>
<div class="pointer-events-none absolute top-[380px] left-[805px] flex font-['Lato',sans-serif] text-[44px] leading-[52px] font-bold text-[#e81c1c]"><span>Ctrl</span><span class="ml-8">+</span><span class="ml-4">2</span></div>
</body>
</html>
